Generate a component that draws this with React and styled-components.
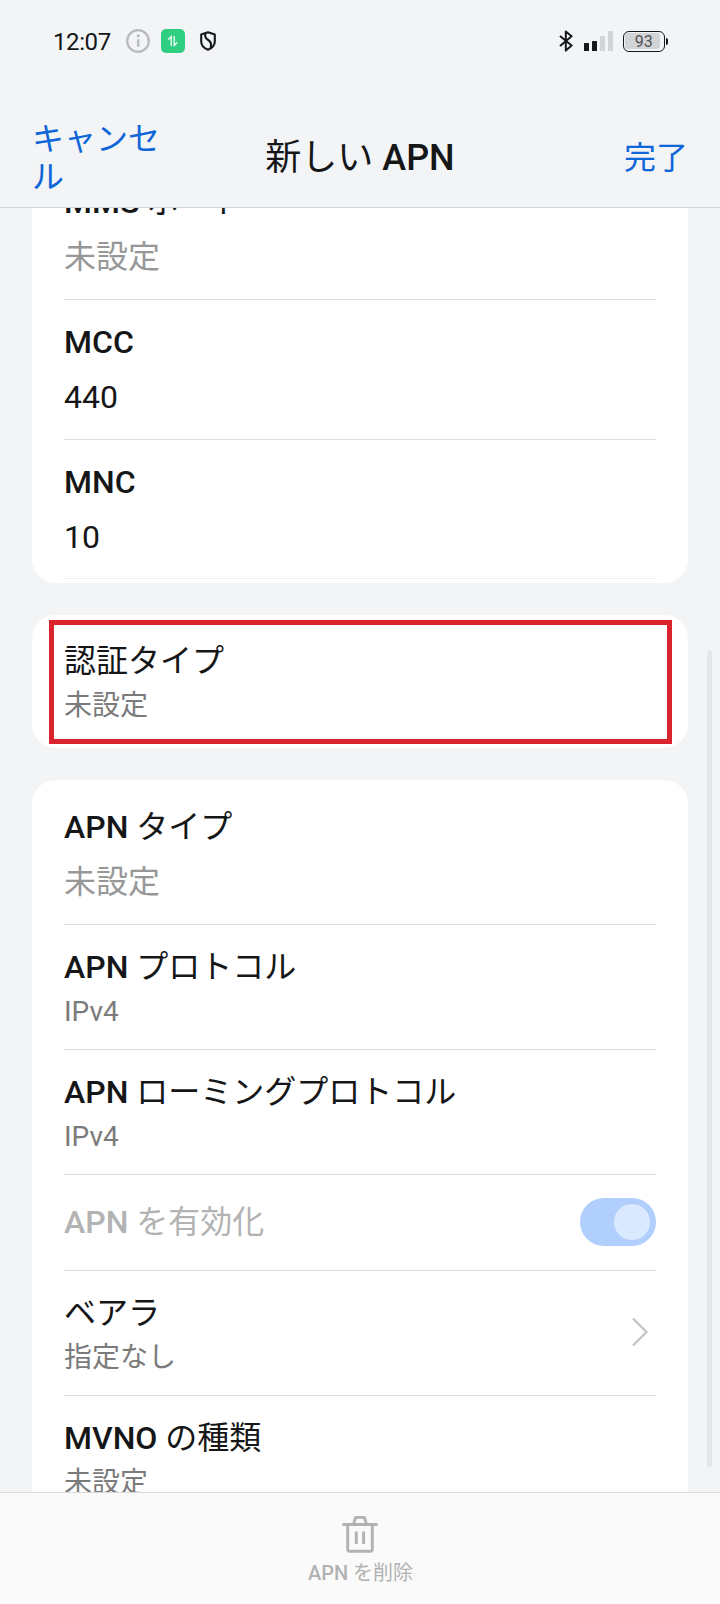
import React from "react";
import styled, { createGlobalStyle } from "styled-components";

const GlobalStyle = createGlobalStyle`
  *, *::before, *::after { box-sizing: border-box; }
  body {
    margin: 0;
    background: #f2f4f6;
    color: #151617;
    font-family: Roboto, "Noto Sans CJK JP", sans-serif;
  }
`;

const Screen = styled.div`
  width: 720px;
  height: 1604px;
  display: flex;
  flex-direction: column;
  overflow: hidden;
  background: #f2f4f6;
`;

const StatusBar = styled.div`
  flex: none;
  height: 82px;
  padding: 0 52px 0 53px;
  display: flex;
  justify-content: space-between;
  align-items: center;
`;

const StatusGroup = styled.div`
  display: flex;
  align-items: center;
  svg { display: block; }
`;

const Clock = styled.span`
  font-size: 24px;
  line-height: 28px;
  width: 73px;
  letter-spacing: -0.4px;
  padding-top: 1px;
`;

const GreenBadge = styled.span`
  width: 24px;
  height: 24px;
  margin: 0 15px 0 11px;
  border-radius: 5px;
  background: #2fce80;
  display: flex;
  align-items: center;
  justify-content: center;
`;

const Signal = styled.div`
  display: flex;
  align-items: flex-end;
  gap: 3.4px;
  height: 20px;
  margin: 0 10px 0 11px;
`;

const SignalBar = styled.i`
  width: 4.6px;
  height: ${(p) => p.$height}px;
  border-radius: 0.5px;
  background: ${(p) => (p.$on ? "#17181a" : "#d3d4d6")};
`;

const Battery = styled.div`
  width: 42px;
  height: 21px;
  padding: 1.2px;
  border: 1.9px solid #17181a;
  border-radius: 6px;
`;

const BatteryLevel = styled.div`
  width: 35px;
  height: 100%;
  border-radius: 3px;
  background: #d2d3d5;
  color: #505153;
  font-size: 16px;
  line-height: 17px;
  text-align: center;
  padding-left: 2px;
`;

const BatteryTip = styled.i`
  width: 2px;
  height: 7px;
  margin-left: 1px;
  border-radius: 0 2px 2px 0;
  background: #17181a;
`;

const NavBar = styled.header`
  flex: none;
  height: 126px;
  padding: 27px 32px 0;
  display: grid;
  grid-template-columns: 1fr auto 1fr;
  align-items: center;
  border-bottom: 1px solid #d3d5d7;
`;

const NavButton = styled.button`
  width: ${(p) => p.$width};
  justify-self: ${(p) => p.$side};
  padding: 0;
  border: 0;
  background: none;
  color: #0f66d8;
  font: inherit;
  font-size: 32px;
  line-height: 38px;
  text-align: left;
`;

const Title = styled.h1`
  margin: 0;
  font-size: 36px;
  font-weight: 400;
  line-height: 42px;
`;

const Body = styled.main`
  position: relative;
  flex: 1;
  min-height: 0;
  overflow: hidden;
`;

const Cards = styled.div`
  display: flex;
  flex-direction: column;
  gap: 32px;
  margin-top: -52px;
  padding: 0 32px;
`;

const Card = styled.section`
  position: relative;
  padding: 4px 32px;
  border-radius: 24px;
  background: #fff;
`;

const Row = styled.div`
  height: ${(p) => p.$height}px;
  padding-top: ${(p) => p.$top ?? 23}px;
  display: flex;
  justify-content: space-between;
  border-bottom: 1px solid ${(p) => p.$line ?? "#dcdddf"};
`;

const SwitchRow = styled(Row)`
  align-items: center;
  padding-bottom: 1px;
`;

const Label = styled.div`
  font-size: 32px;
  line-height: 38px;
  white-space: nowrap;
  color: ${(p) => (p.$disabled ? "#b3b3b3" : "inherit")};
`;

const Latin = styled.span`
  font-weight: 500;
`;

const Value = styled.div`
  margin-top: 17px;
  font-size: 32px;
  line-height: 38px;
  color: ${(p) => (p.$empty ? "#979797" : "inherit")};
`;

const Summary = styled.div`
  margin-top: 9px;
  font-size: 28px;
  line-height: 34px;
  color: #7b7b7b;
`;

const Highlight = styled.div`
  position: absolute;
  inset: 5px 16px 4px 17px;
  border: 5px solid #db232e;
`;

const Switch = styled.span`
  width: 76px;
  height: 48px;
  padding: 6px;
  border-radius: 24px;
  background: #b0cffc;
  display: flex;
  justify-content: flex-end;
`;

const Knob = styled.span`
  width: 36px;
  height: 36px;
  border-radius: 50%;
  background: #dbe9fe;
`;

const Chevron = styled.svg`
  margin: 22px 7px 0 0;
`;

const ScrollThumb = styled.div`
  position: absolute;
  top: 442px;
  right: 8px;
  width: 5px;
  height: 817px;
  border-radius: 3px;
  background: #e5e6e8;
`;

const Toolbar = styled.footer`
  flex: none;
  height: 112px;
  padding-top: 20px;
  border-top: 1px solid #d9d9db;
  background: #fafafa;
  color: #b2b2b2;
  display: flex;
  flex-direction: column;
  align-items: center;
`;

const ToolbarLabel = styled.span`
  margin-top: 6px;
  padding-left: 1px;
  font-size: 20px;
  line-height: 24px;
`;

function Field({ latin, label, value, empty, ...row }) {
  return (
    <Row {...row}>
      <div>
        <Label><Latin>{latin}</Latin>{label}</Label>
        <Value $empty={empty}>{value}</Value>
      </div>
    </Row>
  );
}

function Option({ latin, label, summary, arrow, line }) {
  return (
    <Row $height={125} $line={line}>
      <div>
        <Label>{latin && <Latin>{latin}</Latin>}{label}</Label>
        <Summary>{summary}</Summary>
      </div>
      {arrow && (
        <Chevron width="18" height="32" viewBox="0 0 18 32" fill="none" stroke="#c3c3c3" strokeWidth="2.2">
          <path d="M2 2.5 15.5 16 2 29.5" />
        </Chevron>
      )}
    </Row>
  );
}

export default function App() {
  return (
    <Screen lang="ja">
      <GlobalStyle />
      <StatusBar>
        <StatusGroup>
          <Clock>12:07</Clock>
          <svg width="24" height="24" viewBox="0 0 24 24" fill="none" stroke="#b9babc" strokeWidth="2.2">
            <circle cx="12" cy="12" r="10.8" />
            <path d="M12.2 10.2v7.6" strokeWidth="2.4" />
            <circle cx="12.2" cy="6.8" r="1.5" fill="#b9babc" stroke="none" />
          </svg>
          <GreenBadge>
            <svg width="12" height="12" viewBox="0 0 12 12" fill="none" stroke="#dffaeb" strokeWidth="1.5">
              <path d="M1.2 4.6 4.2 1.6V11M7.2 1v9.4l3-3" />
            </svg>
          </GreenBadge>
          <svg width="16" height="20" viewBox="0 0 16 20" fill="none" stroke="#17181a" strokeWidth="2.1" strokeLinejoin="round">
            <path d="M8 1.2 14.8 3.4V10.5C14.8 14.7 11.9 17.2 8 18.8 4.1 17.2 1.2 14.7 1.2 10.5V3.4Z" />
            <path d="M5.6 2.4C4.2 5.6 5.6 7.4 8.2 9 11.2 10.9 12 13 10.4 17" />
          </svg>
        </StatusGroup>
        <StatusGroup>
          <svg width="14" height="22" viewBox="0 0 14 22" fill="none" stroke="#17181a" strokeWidth="2" strokeLinejoin="round">
            <path d="M1 6 12.6 15.6 6.8 20.6V1.4L12.6 6.2 1 16" />
          </svg>
          <Signal>
            <SignalBar $height={8} $on />
            <SignalBar $height={10} $on />
            <SignalBar $height={15} />
            <SignalBar $height={20} />
          </Signal>
          <Battery>
            <BatteryLevel>93</BatteryLevel>
          </Battery>
          <BatteryTip />
        </StatusGroup>
      </StatusBar>

      <NavBar>
        <NavButton $width="132px" $side="start">キャンセル</NavButton>
        <Title>新しい <Latin>APN</Latin></Title>
        <NavButton $width="auto" $side="end">完了</NavButton>
      </NavBar>

      <Body>
        <Cards>
          <Card>
            <Field latin="MMS " label="ポート" value="未設定" empty $height={140} />
            <Field latin="MCC" value="440" $height={140} />
            <Field latin="MNC" value="10" $height={139} $line="#f2f2f3" />
          </Card>
          <Card>
            <Option label="認証タイプ" summary="未設定" line="transparent" />
            <Highlight />
          </Card>
          <Card>
            <Field latin="APN " label="タイプ" value="未設定" empty $height={141} $top={24} />
            <Option latin="APN " label="プロトコル" summary="IPv4" />
            <Option latin="APN " label="ローミングプロトコル" summary="IPv4" />
            <SwitchRow $height={96} $top={0}>
              <Label $disabled><Latin>APN </Latin>を有効化</Label>
              <Switch><Knob /></Switch>
            </SwitchRow>
            <Option label="ベアラ" summary="指定なし" arrow />
            <Option latin="MVNO " label="の種類" summary="未設定" />
          </Card>
        </Cards>
        <ScrollThumb />
      </Body>

      <Toolbar>
        <svg width="36" height="42" viewBox="0 0 36 42" fill="none" stroke="currentColor" strokeWidth="2.9">
          <path d="M0.4 11.5H35.6" />
          <path d="M11.6 11 13.6 4.4H22.4L24.4 11" strokeLinejoin="round" />
          <path d="M5.7 12V36.3Q5.7 38.3 7.7 38.3H28.3Q30.3 38.3 30.3 36.3V12" />
          <path d="M14.3 18.5V31M21.6 18.5V31" />
        </svg>
        <ToolbarLabel><Latin>APN </Latin>を削除</ToolbarLabel>
      </Toolbar>
    </Screen>
  );
}
